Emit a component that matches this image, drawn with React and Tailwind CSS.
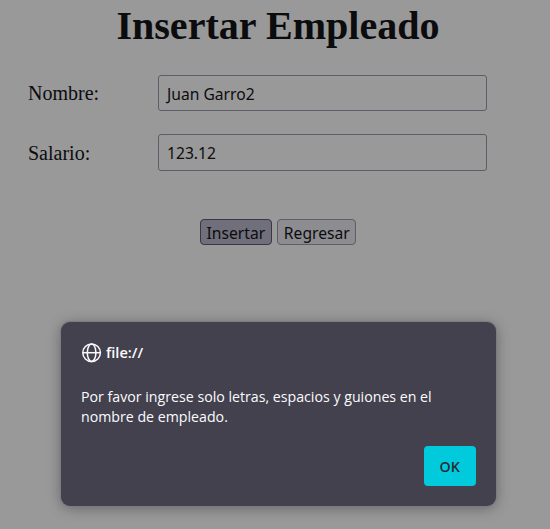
function Field({ label, value, box }) {
  return (
    <div className="flex items-center">
      <div className="w-[130px] pt-px text-[20px] leading-[35px]">{label}</div>
      <div className={`flex w-[329px] items-center rounded-[3px] border border-[#5d5c68] px-[7.5px] font-['Noto_Sans','Open_Sans',sans-serif] text-[17px] leading-6 ${box}`}>
        <span className="inline-block origin-left scale-x-[0.92]">{value}</span>
      </div>
    </div>
  );
}

function Globe() {
  return (
    <svg className="-mr-px ml-px" width="20" height="20" viewBox="0 0 20 20" fill="none" stroke="#fbfbfe" strokeWidth="1.5">
      <circle cx="9.6" cy="9.7" r="8.8" />
      <ellipse cx="9.6" cy="9.7" rx="4.3" ry="8.8" />
      <path d="M.8 9.7h17.6" />
    </svg>
  );
}

export default function App() {
  return (
    <main className="flex h-[529px] w-[550px] flex-col overflow-hidden bg-[#99999a] font-['Liberation_Serif',serif] text-[#0c0c0e]">
      <h1 className="h-[75px] pl-[6px] text-center text-[40.1px] leading-[51px] font-bold whitespace-nowrap">Insertar Empleado</h1>
      <form className="flex flex-col gap-[23px] pl-7">
        <Field label="Nombre:" value="Juan Garro2" box="h-9 pt-px" />
        <Field label="Salario:" value="123.12" box="h-[37px] pt-px" />
      </form>
      <div className="mt-12 ml-[200px] flex gap-[5px] font-['Noto_Sans',sans-serif] text-[17px] leading-6">
        <button type="button" className="flex h-[26px] w-[72px] items-center justify-center rounded border border-[#393842] bg-[#706f7b] pt-px">
          <span className="inline-block scale-x-[0.92]">Insertar</span>
        </button>
        <button type="button" className="flex h-[26px] w-[79px] items-center justify-center rounded border border-[#5d5c68] bg-[#8d8d91] pt-px">
          <span className="inline-block scale-x-[0.92]">Regresar</span>
        </button>
      </div>
      <section className="mt-[77px] ml-[61px] flex h-[184px] w-[435px] flex-col rounded-[9px] bg-[#42414d] px-5 pt-5 font-['Open_Sans',sans-serif] text-[15px] text-[#fbfbfe] shadow-[0_0_0_1px_#7c7c80,0_2px_14px_rgba(0,0,0,0.35)]">
        <div className="flex h-[21px] items-center gap-[5px]">
          <Globe />
          <span className="inline-block origin-left scale-x-[0.97] font-semibold">file://</span>
        </div>
        <p className="mt-[23px] origin-left scale-x-[0.945] leading-5 whitespace-nowrap">
          Por favor ingrese solo letras, espacios y guiones en el<br />
          nombre de empleado.
        </p>
        <button type="button" className="mt-5 flex h-10 w-[52px] items-center justify-center self-end rounded bg-[#00cadb] pt-px font-semibold text-[#2b2a33]">
          <span className="inline-block scale-x-[0.95]">OK</span>
        </button>
      </section>
    </main>
  );
}
